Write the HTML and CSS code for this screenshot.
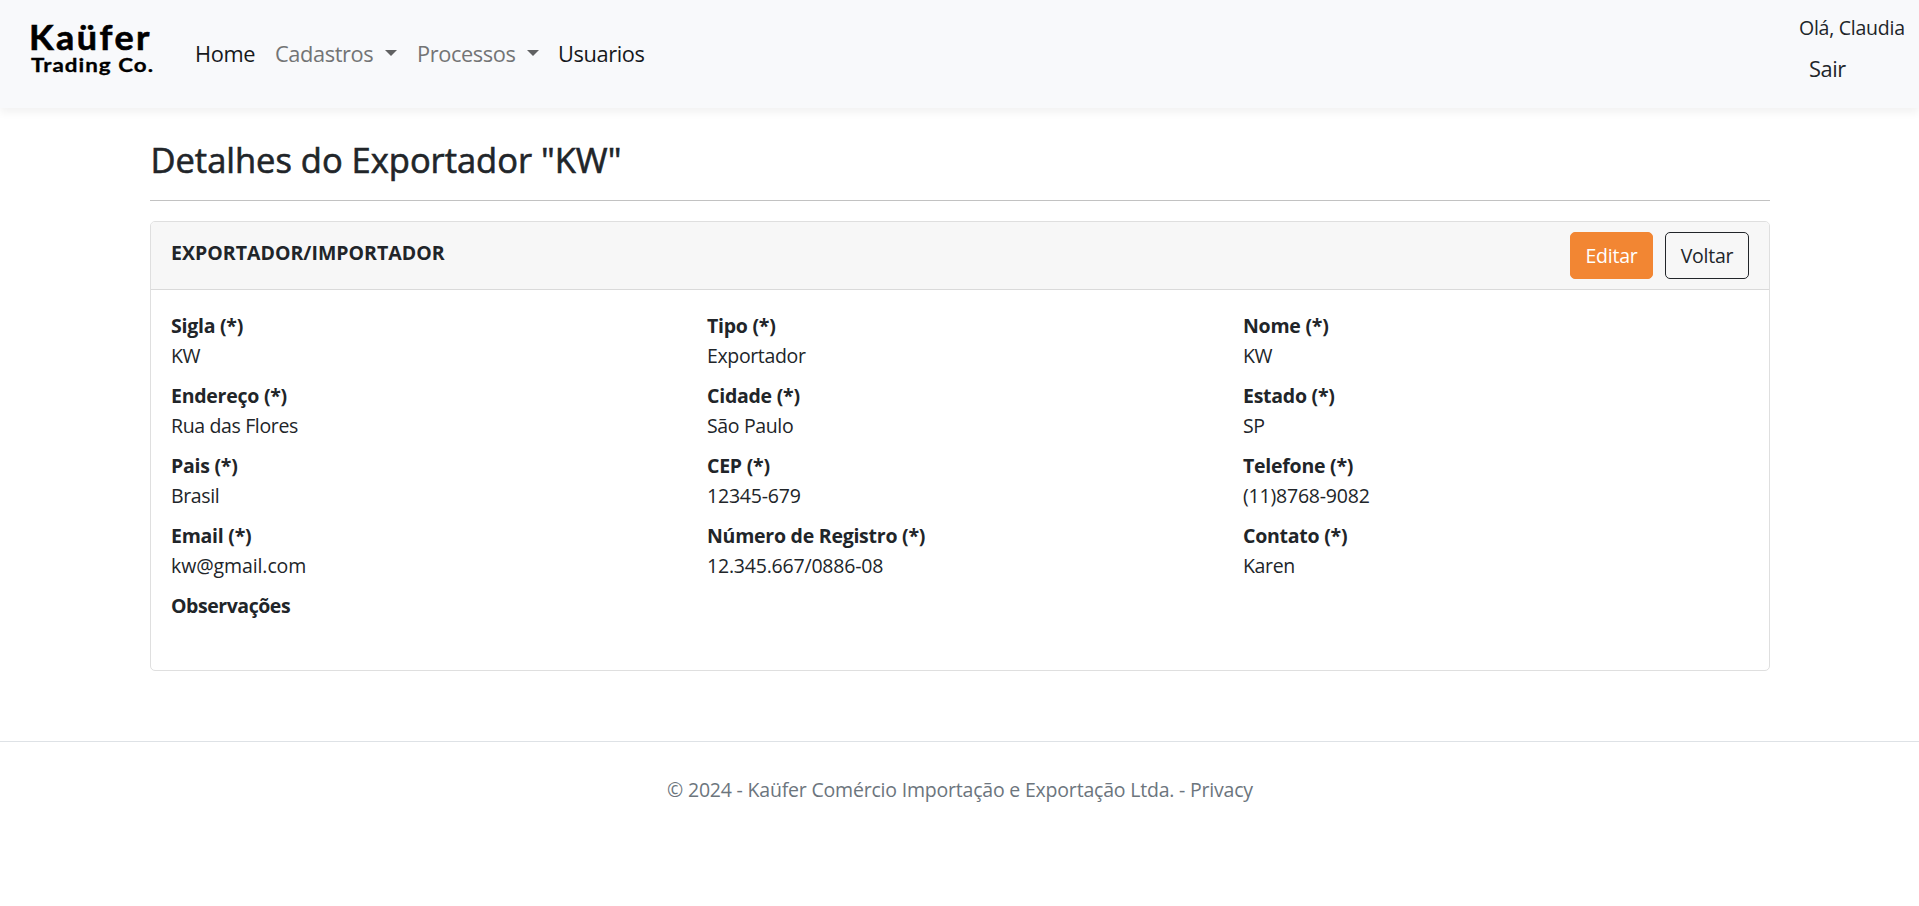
FILE: index.html
```html
<!DOCTYPE html>
<html lang="pt-BR">
<head>
<meta charset="utf-8">
<title>Detalhes do Exportador</title>
<link rel="stylesheet" href="styles.css">
</head>
<body>
<header class="navbar">
  <a class="brand">
    <svg width="128" height="76" viewBox="0 0 128 76" role="img">
      <text class="brand-name" x="-1" y="42" textLength="123" lengthAdjust="spacingAndGlyphs">Kaüfer</text>
      <text class="brand-sub" x="1" y="64" textLength="123" lengthAdjust="spacingAndGlyphs">Trading Co.</text>
    </svg>
  </a>
  <nav class="menu">
    <a class="menu-link home">Home</a>
    <a class="menu-link muted cadastros">Cadastros<i class="caret"></i></a>
    <a class="menu-link muted processos">Processos<i class="caret"></i></a>
    <a class="menu-link usuarios">Usuarios</a>
  </nav>
  <div class="user">
    <span class="hello">Olá, Claudia</span>
    <a class="logout">Sair</a>
  </div>
</header>
<main class="container">
  <h3 class="title">Detalhes do Exportador "KW"</h3>
  <hr class="rule">
  <section class="card">
    <div class="card-header">
      <strong class="card-title">EXPORTADOR/IMPORTADOR</strong>
      <div class="actions">
        <a class="btn btn-edit">Editar</a>
        <a class="btn btn-back">Voltar</a>
      </div>
    </div>
    <dl class="card-body">
      <div class="field"><dt>Sigla (*)</dt><dd>KW</dd></div>
      <div class="field"><dt>Tipo (*)</dt><dd>Exportador</dd></div>
      <div class="field"><dt>Nome (*)</dt><dd>KW</dd></div>
      <div class="field"><dt>Endereço (*)</dt><dd>Rua das Flores</dd></div>
      <div class="field"><dt>Cidade (*)</dt><dd>São Paulo</dd></div>
      <div class="field"><dt>Estado (*)</dt><dd>SP</dd></div>
      <div class="field"><dt>Pais (*)</dt><dd>Brasil</dd></div>
      <div class="field"><dt>CEP (*)</dt><dd class="digits">12345-679</dd></div>
      <div class="field"><dt>Telefone (*)</dt><dd class="digits">(11)8768-9082</dd></div>
      <div class="field"><dt>Email (*)</dt><dd class="email">kw@gmail.com</dd></div>
      <div class="field"><dt>Número de Registro (*)</dt><dd class="digits">12.345.667/0886-08</dd></div>
      <div class="field"><dt>Contato (*)</dt><dd>Karen</dd></div>
      <div class="field"><dt class="notes">Observações</dt><dd></dd></div>
    </dl>
  </section>
</main>
<footer class="footer"><span class="copy">© 2024 - Kaüfer Comércio Importação e Exportação Ltda. - <a>Privacy</a></span></footer>
</body>
</html>
```
FILE: styles.css
```css
* { box-sizing: border-box; }
body {
  margin: 0;
  background: #fff;
  color: #212529;
  font: 400 19.5px/30px "Open Sans", "Noto Sans", sans-serif;
  letter-spacing: -0.25px;
}
.navbar {
  height: 108px;
  display: flex;
  align-items: flex-start;
  background: #f8f9fb;
  box-shadow: 0 5px 8px rgba(0, 0, 0, .05);
}
.brand { padding: 8px 0 0 29.5px; line-height: 0; color: #000; }
.brand svg { fill: #000; overflow: visible; }
.brand-name { font: 700 35px/1 Lato, sans-serif; letter-spacing: 2.4px; stroke: #000; stroke-width: .6px; }
.brand-sub { font: 700 19.5px/1 Lato, sans-serif; letter-spacing: .9px; stroke: #000; stroke-width: .3px; }
.menu { display: flex; padding: 37px 0 0 37.5px; }
.menu-link { font-size: 21.8px; line-height: 34px; letter-spacing: -0.4px; white-space: nowrap; color: #16181b; }
.home { width: 80px; }
.cadastros { width: 142px; }
.processos { width: 141px; }
.muted { color: #737475; display: flex; }
.caret { margin: 13px 0 0 11.5px; width: 0; height: 0; border: 6px solid transparent; border-top-color: #606162; border-bottom: 0; }
.user { margin-left: auto; width: 120px; padding-top: 13px; display: flex; flex-direction: column; }
.logout { padding: 9px 0 0 10px; font-size: 21.8px; line-height: 34px; letter-spacing: -.4px; }
.container { width: 1620px; margin: 0 auto; padding-top: 31px; }
.title { margin: 0 0 19px; padding-left: 1px; font-size: 34.5px; line-height: 42px; font-weight: 500; letter-spacing: -.02px; -webkit-text-stroke: .6px #212529; }
.rule { margin: 0 0 20px; border: 0; border-top: 1px solid #c2c2c2; }
.card { height: 450px; border: 1px solid #dfdfdf; border-radius: 5px; }
.card-header {
  height: 68px;
  display: flex;
  justify-content: space-between;
  padding: 10px 20px;
  background: #f7f7f7;
  border-bottom: 1px solid #dadada;
  border-radius: 4px 4px 0 0;
}
.card-title { font-weight: 700; padding: 6px 0 0 .5px; letter-spacing: .02px; }
.actions { display: flex; gap: 12px; }
.btn { width: 84px; height: 47px; padding: 8px 0 0 1px; border: 1px solid #212529; border-radius: 5px; text-align: center; }
.btn-edit { width: 83px; color: #fff; background: #f28633; border-color: #f28633; }
.card-body { margin: 0 -9px 0 0; padding: 21px 0 0 20.5px; display: grid; grid-template-columns: repeat(3, 536px); row-gap: 10px; }
.field { height: 60px; }
dt { font-weight: 700; }
dd { margin: 0; letter-spacing: -.36px; }
.digits { letter-spacing: -.2px; }
.email { letter-spacing: -.1px; }
.notes { letter-spacing: -.45px; }
.footer { margin-top: 70px; padding: 33px 0 0 1px; height: 100px; border-top: 1px solid #dee2e6; text-align: center; color: #6c757d; letter-spacing: -.2px; }
```
